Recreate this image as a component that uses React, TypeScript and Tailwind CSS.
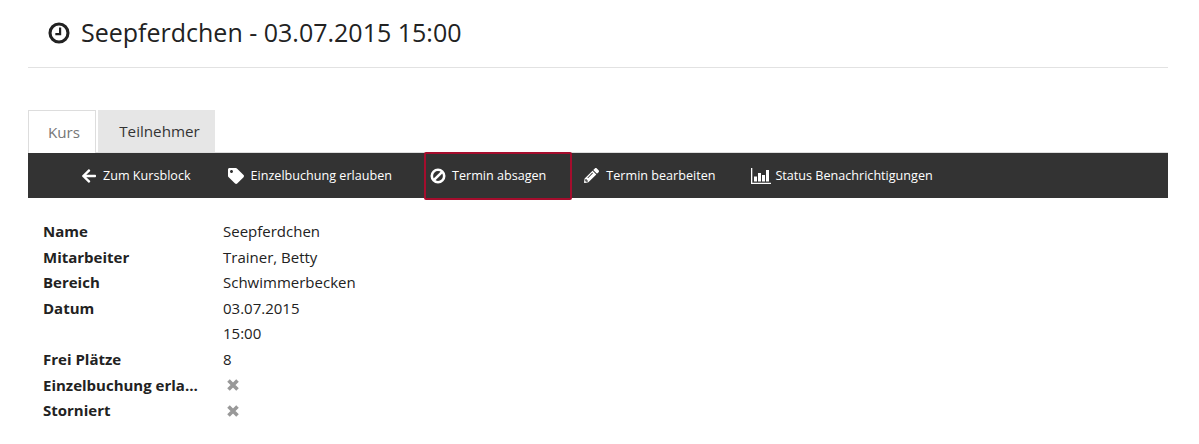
import type { ReactNode } from 'react'
import { FaArrowLeft, FaPencilAlt, FaTag } from 'react-icons/fa'

const rows: [string, string[]][] = [
  ['Name', ['Seepferdchen']],
  ['Mitarbeiter', ['Trainer, Betty']],
  ['Bereich', ['Schwimmerbecken']],
  ['Datum', ['03.07.2015', '15:00']],
  ['Frei Plätze', ['8']],
]

function ClockIcon() {
  return (
    <svg viewBox="0 0 24 24" className="h-[22px] w-[22px]" fill="none" stroke="currentColor">
      <circle cx="12" cy="12" r="9.8" strokeWidth="3.4" />
      <path d="M13.2 6v7.2H8" strokeWidth="2.4" />
    </svg>
  )
}

function BanIcon() {
  return (
    <svg viewBox="0 0 16 16" className="h-[16px] w-[16px]" fill="none" stroke="currentColor" strokeWidth="2.6">
      <circle cx="8" cy="8" r="6.2" />
      <path d="M3.8 12.2l8.4-8.4" />
    </svg>
  )
}

function ChartIcon() {
  return (
    <svg viewBox="0 0 20 16" className="h-[16px] w-[20px]" fill="currentColor">
      <path d="M0 0h1.3v14.7H20V16H0z" />
      <path d="M3 8.5h3v5H3zM7 5h3v8.5H7zM11 7h3v6.5h-3zM15 2h3v11.5h-3z" />
    </svg>
  )
}

function CrossIcon() {
  return (
    <svg viewBox="0 0 12 12" className="h-[12px] w-[12px]" stroke="currentColor" strokeWidth="3.6">
      <path d="M1.5 1.5l9 9M10.5 1.5l-9 9" />
    </svg>
  )
}

function ToolButton({ icon, label, active, className }: { icon: ReactNode; label: string; active?: boolean; className?: string }) {
  return (
    <div
      className={
        active
          ? 'ml-[7px] flex h-[48px] items-center gap-[6px] rounded-[2px] border-2 border-[#a50d2d] pl-[4px] pr-[24px]'
          : `flex h-[45px] items-center pl-[12px] ${className ?? 'gap-[7px] pr-[25px]'}`
      }
    >
      {icon}
      <span className="pt-[1px]">{label}</span>
    </div>
  )
}

export default function App() {
  return (
    <div className="h-[444px] overflow-hidden bg-white pl-[28px] pr-[31px] font-['Open_Sans',sans-serif] text-[#222]">
      <div className="flex h-[68px] items-center gap-[11px] border-b border-[#e2e2e2] px-[20px] pb-[2px]">
        <ClockIcon />
        <h1 className="text-[25px]">Seepferdchen - 03.07.2015 15:00</h1>
      </div>
      <div className="mt-[42px] flex h-[43px] gap-[2px] border-b border-[#ddd] text-[15.2px]">
        <div className="flex h-[43px] w-[68px] items-center justify-center border border-b-0 border-[#ddd] bg-white pl-[4px] text-[#777]">
          Kurs
        </div>
        <div className="flex h-[42px] w-[117px] items-center justify-center bg-[#e6e6e6] pl-[6px] text-[#333]">
          Teilnehmer
        </div>
      </div>
      <div className="flex h-[45px] items-center bg-[#333] pl-[41px] text-[12.6px] text-white">
        <ToolButton icon={<FaArrowLeft size={16} />} label="Zum Kursblock" className="gap-[6px] pr-[25px]" />
        <ToolButton icon={<FaTag size={16} />} label="Einzelbuchung erlauben" />
        <ToolButton icon={<BanIcon />} label="Termin absagen" active />
        <ToolButton icon={<FaPencilAlt size={15} />} label="Termin bearbeiten" className="gap-[7px] pr-[24px]" />
        <ToolButton icon={<ChartIcon />} label="Status Benachrichtigungen" className="gap-[4px]" />
      </div>
      <div className="mt-[21px] px-[15px] text-[15px] leading-[25.6px]">
        {rows.map(([label, values]) => (
          <div key={label} className="flex">
            <div className="w-[180px] font-bold">{label}</div>
            <div>
              {values.map((value) => (
                <div key={value}>{value}</div>
              ))}
            </div>
          </div>
        ))}
        {['Einzelbuchung erlauben', 'Storniert'].map((label) => (
          <div key={label} className="flex">
            <div className="w-[180px] pr-[22px]">
              <div className="truncate font-bold">{label}</div>
            </div>
            <div className="flex items-center pl-[4px] text-[#999]">
              <CrossIcon />
            </div>
          </div>
        ))}
      </div>
    </div>
  )
}
